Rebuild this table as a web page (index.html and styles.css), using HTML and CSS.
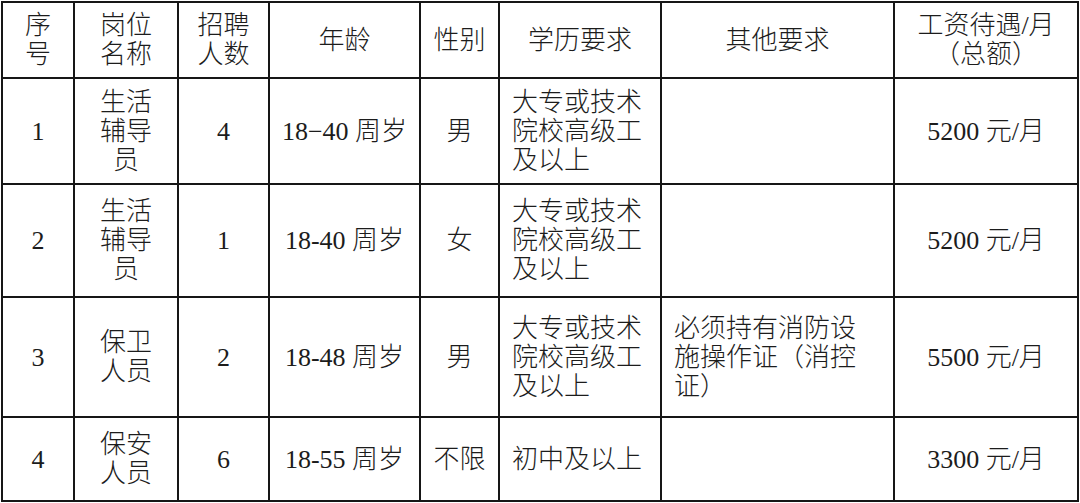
FILE: index.html
```html
<!DOCTYPE html>
<html lang="zh-CN">
<head>
<meta charset="utf-8">
<title>招聘岗位</title>
<link rel="stylesheet" href="styles.css">
</head>
<body>
<table class="jobs">
  <colgroup>
    <col class="c1"><col class="c2"><col class="c3"><col class="c4">
    <col class="c5"><col class="c6"><col class="c7"><col class="c8">
  </colgroup>
  <tr class="head">
    <td>序<br>号</td>
    <td>岗位<br>名称</td>
    <td>招聘<br>人数</td>
    <td>年龄</td>
    <td>性别</td>
    <td>学历要求</td>
    <td>其他要求</td>
    <td>工资待遇/月<br>（总额）</td>
  </tr>
  <tr class="r1">
    <td>1</td>
    <td>生活<br>辅导<br>员</td>
    <td>4</td>
    <td>18−40 周岁</td>
    <td>男</td>
    <td class="left">大专或技术<br>院校高级工<br>及以上</td>
    <td class="left"></td>
    <td>5200 元/月</td>
  </tr>
  <tr class="r2">
    <td>2</td>
    <td>生活<br>辅导<br>员</td>
    <td>1</td>
    <td>18-40 周岁</td>
    <td>女</td>
    <td class="left">大专或技术<br>院校高级工<br>及以上</td>
    <td class="left"></td>
    <td>5200 元/月</td>
  </tr>
  <tr class="r3">
    <td>3</td>
    <td>保卫<br>人员</td>
    <td>2</td>
    <td>18-48 周岁</td>
    <td>男</td>
    <td class="left">大专或技术<br>院校高级工<br>及以上</td>
    <td class="left">必须持有消防设<br>施操作证（消控<br>证）</td>
    <td>5500 元/月</td>
  </tr>
  <tr class="r4">
    <td>4</td>
    <td>保安<br>人员</td>
    <td>6</td>
    <td>18-55 周岁</td>
    <td>不限</td>
    <td class="left">初中及以上</td>
    <td class="left"></td>
    <td>3300 元/月</td>
  </tr>
</table>
</body>
</html>
```

FILE: styles.css
```css
html, body {
  margin: 0;
  padding: 0;
  background: #ffffff;
}

body {
  padding: 1px;
}

.jobs {
  border-collapse: collapse;
  table-layout: fixed;
  width: 1078px;
  font-family: "Liberation Serif", "Noto Sans CJK SC", serif;
  font-size: 26px;
  font-weight: 300;
  line-height: 29px;
  color: #1c1c1c;
}

.jobs td {
  border: 2px solid #161616;
  padding: 0 10px;
  text-align: center;
  vertical-align: middle;
  white-space: nowrap;
}

.jobs td.left {
  text-align: left;
  padding-left: 12px;
}

.c1 { width: 72px; }
.c2 { width: 104px; }
.c3 { width: 91px; }
.c4 { width: 151px; }
.c5 { width: 79px; }
.c6 { width: 162px; }
.c7 { width: 233px; }
.c8 { width: 184px; }

.head { height: 76px; }
.r1 { height: 106px; }
.r2 { height: 113px; }
.r3 { height: 120px; }
.r4 { height: 84px; }
```
